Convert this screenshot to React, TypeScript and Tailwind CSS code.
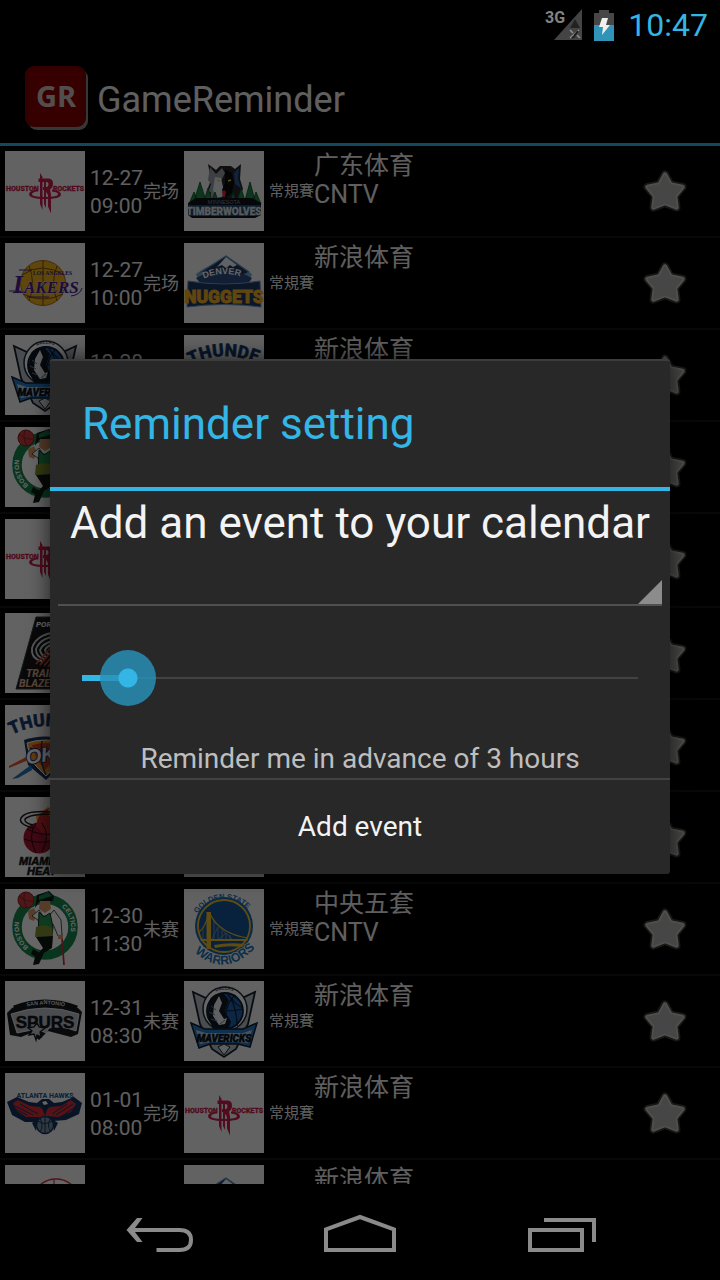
import { useState } from 'react';
import type { ReactNode } from 'react';

const roboto = 'Roboto, sans-serif';
const serif = '"Liberation Serif", serif';
const sans = '"Liberation Sans", sans-serif';

function Rockets() {
  return (
    <g fill="#c8204c">
      <text x="1" y="39.500" fontFamily={roboto} fontWeight="800" fontSize="7" stroke="#c8204c" strokeWidth=".3">HOUSTON</text>
      <text x="48" y="39.500" fontFamily={roboto} fontWeight="800" fontSize="7" stroke="#c8204c" strokeWidth=".3">ROCKETS</text>
      <path d="M35 22l2.500 4v33l-2.500-6z" />
      <path d="M33.500 27.500H43q5 0 5 5 0 4-3 6l1 5v19l-3-7V44l-3-5h-2v-3h4q1.500-.5 1.500-3 0-2-2-2h-8z" />
      <path d="M39 31h2v26l-2-4z" />
      <path d="M33 38.500q-9 1-9 4.500 0 5 16 5t16-4.500q0-4-9-5v2q6 .8 6 2.800 0 2.700-13 2.700t-13-2.700q0-2 6-3z" />
    </g>
  );
}

function Wolves() {
  return (
    <g>
      <path fill="#26272c" d="M24 13l8 6 4-4h11l4 3 6-5-1 15 3 10-5 9-9 5H35l-9-7-2-8 3-8z" />
      <path fill="#9a9ea6" d="M26 16l6 7 6-6 3 5-4 8-3 16-9 4 2-9-3 1 3-9-3-4z" />
      <path fill="#e6e8ec" d="M31 26l6 1 2 9 2 3-3 7-6 1-3-8z" />
      <path fill="#2c5a9c" d="M50 22l5-5-1 11 3 9-6-4z" />
      <path fill="#0b0c0e" d="M41 18l7 4 2 10-2 10-7 6-3-9 3-7z" />
      <path stroke="#e9c832" strokeWidth="1.500" d="M33 29l3 1M44 30l3-1" />
      <path fill="#d22c42" d="M38 41l2-2 2 2-1 5h-2z" />
      <g fill="#1f8a45" stroke="#0c4625" strokeWidth=".8">
        <path d="M16 31l7 22H9zM66 31l6 22H60zM24 37l5 16H19zM57 37l5 16H52zM31 41l4 12h-8zM49 41l4 12h-7zM10 41l5 12H5zM72 41l5 12h-9z" />
      </g>
      <path fill="#10131a" d="M12 47h56l9 5v12l-6 3H8l-4-3V52z" />
      <text x="40" y="52.500" textAnchor="middle" fontFamily={sans} fontSize="5.500" fill="#80848c">MINNESOTA</text>
      <path fill="#1f4a72" d="M4 54h73l-3 11H7z" />
      <text x="40" y="63.500" textAnchor="middle" fontFamily={roboto} fontWeight="800" fontSize="10" fill="#dfe5ea" stroke="#dfe5ea" strokeWidth=".3">TIMBERWOLVES</text>
    </g>
  );
}

function Lakers() {
  return (
    <g>
      <circle cx="38" cy="40" r="22.500" fill="#eeb11c" stroke="#a96f10" />
      <g fill="none" stroke="#6b4510" strokeWidth=".9">
        <path d="M17 32q20-14 42 0M38 17.500v45M24 23q7 17 0 35M52 23q-7 17 0 35M18 51q20 10 40 0" />
      </g>
      <text x="28" y="31.500" fontFamily={serif} fontWeight="700" fontSize="5.600" fill="#4d2383">LOS ANGELES</text>
      <g fontFamily={serif} fontStyle="italic" fontWeight="700" fill="#4b2290" stroke="#ecdff2" strokeWidth=".6" paintOrder="stroke">
        <text x="8" y="50" fontSize="25">L</text>
        <text x="19" y="50" fontSize="17">AKERS</text>
      </g>
      <path fill="none" stroke="#4b2290" d="M4 48h12M66 53q9-1 11-8M14 27h13M22 54h22" />
    </g>
  );
}

function Nuggets() {
  return (
    <g>
      <path fill="#79a9d0" d="M12 31q28-22 56 0l-3 8H15z" />
      <path fill="#1e3767" stroke="#5b90c2" strokeWidth="1.200" d="M17 29l25-16 23 16-6 3q-18-8-35 1z" />
      <path fill="#f2f4f8" d="M42 14l11 8-4 2-3-2-4 3-4-3-5 2z" />
      <path fill="#2d4c83" d="M12 35q28-15 56 0l-4 6H17z" />
      <path id="denver-arc" fill="none" d="M17 37q24-12 48 0" />
      <text fontFamily={sans} fontWeight="700" fontSize="9" fill="#fff"><textPath href="#denver-arc" startOffset="3">DENVER</textPath></text>
      <path fill="#1e3767" stroke="#6d95b8" d="M4 38q36 6 72 0l1 26q-37-5-74 0z" />
      <text x="40" y="60" textAnchor="middle" fontFamily={roboto} fontWeight="900" fontSize="17.500" fill="#f0b12a" stroke="#f0b12a" strokeWidth=".8">NUGGETS</text>
    </g>
  );
}

function Mavericks() {
  return (
    <g>
      <path fill="#b9c0c8" stroke="#15202c" strokeWidth="1.800" d="M9 11l13 6h36l13-6-7 32-12 25-12 8-12-8-12-25z" />
      <circle cx="41" cy="28" r="22" fill="#fff" stroke="#1b2734" strokeWidth="1.500" />
      <circle cx="41" cy="30" r="18" fill="#1e63ac" stroke="#0d1a2c" strokeWidth="1.800" />
      <path fill="none" stroke="#101c30" strokeWidth="1.200" d="M43 12q10 12 10 33M48 18q6 8 10 8M42 30q9 0 17-2M51 14q-9 8-10 25" />
      <path fill="#111923" d="M26 18q6-7 14-5l5 6-4 11 6 11-3 8H30l-7-13z" />
      <path fill="#eef1f4" d="M35 15l3 7-3 8 5 8 3-1-2 6-6 1-6-9 1-11z" />
      <path stroke="#707b87" strokeWidth="1" d="M27 25l5 4M25 31l6 3M27 38l6 2M36 43l5-4" />
      <path id="dallas-arc" fill="none" d="M29 12q12-7 24 0" />
      <text fontFamily={sans} fontWeight="700" fontSize="4.500" fill="#26313f"><textPath href="#dallas-arc" startOffset="3">DALLAS</textPath></text>
      <path fill="#2779c2" stroke="#10202f" strokeWidth="1.500" d="M7 42l14 6h38l14-6-7 24-12-3H26l-11 4z" />
      <path fill="#b9cede" d="M12 49l10 3h37l9-3-4 13-10-1H27l-11 2z" />
      <text x="40" y="60.500" textAnchor="middle" fontFamily={roboto} fontWeight="900" fontStyle="italic" fontSize="10" fill="#0b1119" stroke="#0b1119" strokeWidth=".5">MAVERICKS</text>
      <path fill="#e8edf1" stroke="#17212d" d="M34 66l6-3 6 3-6 8z" />
    </g>
  );
}

function Thunder() {
  return (
    <g>
      <path id="thunder-arc" fill="none" d="M5 31q34-19 73-1" />
      <text fontFamily={roboto} fontWeight="800" fontSize="17.500" fill="#143a6d" stroke="#143a6d" strokeWidth=".5"><textPath href="#thunder-arc" startOffset="2">THUNDER</textPath></text>
      <path fill="#17335c" d="M19 35q20-7 44 0l-3 22-19 18-18-15z" />
      <path fill="#f09a25" stroke="#fff" d="M22 38q18-6 38 0l-4 18-15 15-15-15z" />
      <path fill="#d8401f" d="M27 40q14-4 27 0l-5 16-9 9-8-10z" />
      <path fill="none" stroke="#17335c" strokeWidth="1.500" d="M25 43q15 7 33-1M37 36q-3 20 4 34M49 37q6 15-4 26" />
      <path fill="#e2542b" d="M4 61l19-10-2 5-17 7z" />
      <path fill="#2173b5" d="M7 74l19-14 1 5-14 8z" />
      <text x="21" y="58" fontFamily={sans} fontStyle="italic" fontWeight="700" fontSize="20" fill="#fff" stroke="#17335c" strokeWidth="2" paintOrder="stroke" transform="rotate(-8 30 54)">OKC</text>
    </g>
  );
}

function Celtics() {
  return (
    <g>
      <circle cx="40" cy="38" r="28" fill="#fff" stroke="#17854b" strokeWidth="9.500" />
      <path id="boston-arc" fill="none" d="M25.100 59.300A26 26 0 0 1 16.400 27" />
      <text fontFamily={sans} fontWeight="700" fontSize="6.500" fill="#fff"><textPath href="#boston-arc" startOffset="2">BOSTON</textPath></text>
      <path id="celtics-arc" fill="none" d="M54.900 16.700A26 26 0 0 1 59.900 54.700" />
      <text fontFamily={sans} fontWeight="700" fontSize="6.500" fill="#fff"><textPath href="#celtics-arc" startOffset="2">CELTICS</textPath></text>
      <circle cx="21" cy="11" r="8" fill="#c83b3c" stroke="#8a2226" />
      <path fill="none" stroke="#8a2226" d="M14 7q7 6 14 5M20 3q-3 8 2 16" />
      <path fill="#111c17" d="M32 6l12-4 5 5-1 5-14 1-4 6z" />
      <path fill="#17854b" d="M34 7l9-4 4 4-13 4z" />
      <path fill="#d89a68" d="M35 12h10l1 8-6 4-6-4zM23 22l6-3 3 6-3 7-5-2z" />
      <path fill="#fff" stroke="#182c22" strokeWidth=".8" d="M27 27l7-6 4 6h6l5-6 7 10 1 15-4 1-5-12-4 4H35l-2-8z" />
      <path fill="#249151" stroke="#14331f" d="M34 23l5 5 6-4 3 14-1 9H33z" />
      <path fill="#7f8f2d" d="M31 38q9-4 16 1l1 8-18 1z" />
      <path fill="#101913" d="M31 48l17-1-1 12-8 5-5 11-6 1 2-8 8-9zM28 60l10 6-3 4-9-5z" />
      <path stroke="#c42d3c" strokeWidth="1.700" d="M57 49l2 27" />
      <path fill="#d89a68" d="M53 46h5v4h-5z" />
    </g>
  );
}

function Blazers() {
  return (
    <g>
      <path fill="#17181b" stroke="#3a3b40" d="M31 4h43L56 76H11z" />
      <text x="31" y="14" fontFamily={roboto} fontWeight="800" fontStyle="italic" fontSize="8" fill="#fff">PORTLAND</text>
      <g fill="none" stroke="#d5d8dc" strokeWidth="1.800">
        <path d="M58 19q-26 0-31 16-1 11 10 13M57 23q-21 0-26 13 0 8 8 10M55 27q-16 1-20 10 1 6 7 7M53 31q-10 0-13 6 1 4 5 4" />
      </g>
      <path fill="none" stroke="#d34c38" strokeWidth="1.800" d="M50 30L31 51M54 30L35 52M58 30L39 53M62 30L43 54" />
      <g fontFamily={roboto} fontWeight="800" fontStyle="italic" fontSize="10.500" fill="#d9ad92">
        <text x="21" y="64">TRAIL</text>
        <text x="14" y="74">BLAZERS</text>
      </g>
    </g>
  );
}

function Heat() {
  return (
    <g>
      <path fill="#ee9d23" d="M31 19l12-9 7 4-2 9 9-3-9 14H34z" />
      <circle cx="34" cy="41" r="15.500" fill="#a61733" />
      <path fill="#c72731" d="M31 28q2-12 13-17-4 6 3 10-1 11 4 18l-4 9z" />
      <path fill="none" stroke="#26060d" d="M22 32q13 7 27 5M19 42q15 6 30 1M31 26q-9 13 0 30M37 26q9 12 0 29" />
      <path fill="none" stroke="#1a1a1d" strokeWidth="1.500" d="M28 31q-15-4-12-10 5-8 31-6M28 28q-9-2-8-6 5-5 27-5" />
      <g fontFamily={sans} fontStyle="italic" fontWeight="700" fill="#17171a" stroke="#17171a" strokeWidth=".6">
        <text x="14" y="68" fontSize="11">MIAMI</text>
        <text x="22" y="78" fontSize="11">HEAT</text>
      </g>
    </g>
  );
}

function Warriors() {
  return (
    <g>
      <circle cx="40" cy="37" r="29" fill="#1765ae" />
      <circle cx="40" cy="37" r="26" fill="#145398" stroke="#f1bf2c" strokeWidth="1.800" />
      <path fill="#f1bf2c" d="M22.500 23H27v37h-4.500zM16 50h48l-1 2H17zM30 56q16-3 31-1l-3 3q-14-2-27 1z" />
      <path fill="none" stroke="#f1bf2c" strokeWidth="1.200" d="M26 25q10 20 38 24M24 25q-2 13-9 18" />
      <path fill="none" stroke="#8999a0" strokeWidth=".8" d="M30 33v17M34 38v12M38 41v9M42 44v6M46 46v4M29 32l19 18M34 38l-6 12M42 44l-7 6M19 37v13" />
      <path id="golden-arc" fill="none" d="M11 29A32 32 0 0 1 68 26" />
      <text fontFamily={sans} fontWeight="700" fontSize="7.500" fill="#1d71b6"><textPath href="#golden-arc" startOffset="5">GOLDEN STATE</textPath></text>
      <path id="warriors-arc" fill="none" d="M9 62Q41 91 72 58" />
      <text fontFamily={sans} fontWeight="700" fontSize="12.500" fill="#1d71b6" stroke="#f4f4f4" strokeWidth="1.500" paintOrder="stroke"><textPath href="#warriors-arc" startOffset="2">WARRIORS</textPath></text>
    </g>
  );
}

function Spurs() {
  return (
    <g>
      <path fill="#17191d" d="M7 27q32-13 66 0l4 4-4 22-7 3-23-6-9 9-8-7-10 4-11-2L2 32z" />
      <path fill="#b9bfc5" stroke="#fff" strokeWidth=".8" d="M6 33q34-12 68 0l-3 17q-16-6-27-3l-3 5-9-4-20 4z" />
      <path fill="none" stroke="#111418" strokeWidth="5" d="M9 27q31-12 63 0" />
      <path id="antonio-arc" fill="none" d="M12 28q28-9 58 0" />
      <text fontFamily={sans} fontWeight="700" fontSize="5.500" fill="#d5d8da"><textPath href="#antonio-arc" startOffset="10">SAN ANTONIO</textPath></text>
      <text x="40" y="47" textAnchor="middle" fontFamily={sans} fontWeight="700" fontSize="17" fill="#14161a" stroke="#14161a" strokeWidth=".5">SPURS</text>
      <path fill="#c4c9ce" stroke="#14161a" strokeWidth="1.300" d="M32 42l2 4 6 1-5 4 1 5-4-2-1 5-2-6-5 1 3-4-4-3 6-1z" />
    </g>
  );
}

function Hawks() {
  return (
    <g>
      <text x="40" y="25" textAnchor="middle" fontFamily={roboto} fontWeight="800" fontSize="7" fill="#1d568e">ATLANTA HAWKS</text>
      <path fill="#14345f" d="M2 29l10-5 12 5 8 1 5-4h7l5 4 8-1 12-5 8 6-3 11-13 6-13 1-7 3-8-2-13 0-13-7z" />
      <path fill="#d92f37" d="M8 30l5-3 12 6 10 1 5 4 5-4 11-1 10-6 5 4-5 8-13 5-11-1-2 4-7-3-12 0-9-6z" />
      <g stroke="#14345f" strokeWidth="1"><path d="M6 34l16 8M10 33l18 9M15 31l18 10M72 33l-15 10M68 31l-17 11M62 31l-15 10" /></g>
      <path fill="#182f52" d="M36 28q4-3 8 0l-1 6-3 9-3-8z" />
      <path fill="#fff" d="M37 29l4-1 2 3-4 1z" />
      <circle cx="40" cy="52" r="8.500" fill="#78909f" stroke="#14345f" strokeWidth="1.500" />
      <path fill="none" stroke="#14345f" d="M33 48q7 5 14 0M40 43v18M35 45q4 8 0 14M46 45q-5 7 0 14" />
      <path fill="#14345f" d="M27 50l6-4-2 12zM53 50l-6-4 2 12z" />
    </g>
  );
}

function Clippers() {
  return (
    <g>
      <circle cx="51" cy="38" r="24" fill="#fff" stroke="#d42f40" strokeWidth="1.500" />
      <path fill="none" stroke="#d42f40" strokeWidth="1.200" d="M35 21q10 12 31 0M49 14v45M32 48q20-12 40 0" />
      <path fill="#244d95" d="M8 44q30-14 64-6l-6 10q-28-6-54 4z" />
    </g>
  );
}

const logos: Record<string, () => ReactNode> = {
  Rockets, Timberwolves: Wolves, Lakers, Nuggets, Mavericks, Thunder,
  Celtics, Blazers, Heat, Warriors, Spurs, Hawks, Clippers,
};

function TeamLogo({ team }: { team: string }) {
  const Art = logos[team];
  return (
    <svg viewBox="0 0 80 80" role="img" aria-label={team} className="size-20 shrink-0 bg-[#f4f4f4]">
      <Art />
    </svg>
  );
}

type Game = {
  home: string;
  away: string;
  day?: string;
  time?: string;
  state?: string;
  kind?: string;
  channels?: string[];
  tall?: boolean;
};

const games: Game[] = [
  { home: 'Rockets', away: 'Timberwolves', day: '12-27', time: '09:00', state: '完场', kind: '常規賽', channels: ['广东体育', 'CNTV'] },
  { home: 'Lakers', away: 'Nuggets', day: '12-27', time: '10:00', state: '完场', kind: '常規賽', channels: ['新浪体育'] },
  { home: 'Mavericks', away: 'Thunder', day: '12-28', channels: ['新浪体育'] },
  { home: 'Celtics', away: 'Clippers' },
  { home: 'Rockets', away: 'Clippers', tall: true },
  { home: 'Blazers', away: 'Clippers' },
  { home: 'Thunder', away: 'Clippers' },
  { home: 'Heat', away: 'Clippers' },
  { home: 'Celtics', away: 'Warriors', day: '12-30', time: '11:30', state: '未赛', kind: '常規賽', channels: ['中央五套', 'CNTV'] },
  { home: 'Spurs', away: 'Mavericks', day: '12-31', time: '08:30', state: '未赛', kind: '常規賽', channels: ['新浪体育'] },
  { home: 'Hawks', away: 'Rockets', day: '01-01', time: '08:00', state: '完场', kind: '常規賽', channels: ['新浪体育'] },
  { home: 'Clippers', away: 'Nuggets', channels: ['新浪体育'] },
];

const STAR = 'M25 7.500L30.500 17.500 42.500 20 35 29 36.500 40.500 25 36 13.500 40.500 15 29 7.500 20 19.500 17.500Z';

function GameRow({ game }: { game: Game }) {
  return (
    <li className={`flex shrink-0 border-b-2 border-[#141414] pt-[5px] pl-[5px] ${game.tall ? 'h-[94px]' : 'h-[92px]'}`}>
      <TeamLogo team={game.home} />
      <div className="ml-[5px] w-[53px] shrink-0 pt-[13px] text-[21px] leading-7">
        <div className="h-7">{game.day}</div>
        <div className="h-7">{game.time}</div>
      </div>
      <span className="flex h-20 w-[41px] shrink-0 items-center text-[18px]">{game.state}</span>
      <TeamLogo team={game.away} />
      <span className="ml-[5px] flex h-20 w-[45px] shrink-0 items-center text-[15px]">{game.kind}</span>
      <div className="flex flex-1 flex-col text-[25px] leading-[29px]">
        {game.channels?.map((channel) => (
          <span key={channel}>{channel}</span>
        ))}
      </div>
      <button type="button" aria-label="Remind me" className="mr-8 flex h-20 w-12 items-center justify-center">
        <svg viewBox="0 0 48 48" className="size-12">
          <path d={STAR} fill="#b0b0b0" stroke="#3c3c34" strokeWidth="8" strokeLinejoin="round" />
          <path d={STAR} fill="#b0b0b0" stroke="#c6c6c4" strokeWidth="4.500" strokeLinejoin="round" />
          <path d={STAR} fill="#b0b0b0" stroke="#b0b0b0" strokeWidth="1" strokeLinejoin="round" />
        </svg>
      </button>
    </li>
  );
}

function StatusBar() {
  return (
    <div className="flex h-[50px] shrink-0 items-center justify-end pr-3 text-[#33b5e5]">
      <svg viewBox="0 0 38 34" className="mr-3 h-[34px] w-[38px]" aria-label="3G signal">
        <text x="1" y="15" fontFamily={roboto} fontWeight="700" fontSize="16" fill="#828282">3G</text>
        <path fill="#444" d="M38 1v31H10z" />
        <path fill="#222" d="M31 11l5 9H26z" />
        <path stroke="#909090" strokeWidth="1.500" d="M26 22l3 3M35 22l-9 8M33 27l3 3" />
        <path stroke="#1c1c1c" strokeWidth="2" d="M30 28l4-5M28 30l3-2" />
      </svg>
      <svg viewBox="0 0 20 32" className="mr-[14px] h-8 w-5" aria-label="Battery charging">
        <path fill="#474747" d="M5 1h10v3h5v12H0V4h5z" />
        <path fill="#2f94b8" d="M0 16h20v16H0z" />
        <path fill="#f0f0ee" d="M8 9h6l-2 7h4L8 26l1-8H5z" />
      </svg>
      <time className="text-[32px] leading-none">10:47</time>
    </div>
  );
}

function NavBar() {
  return (
    <nav className="flex h-24 shrink-0 items-center justify-center gap-[122px] text-[#8a8a8a]">
      <button type="button" aria-label="Back">
        <svg viewBox="0 0 80 48" className="h-12 w-20" fill="none" stroke="currentColor" strokeWidth="4">
          <path d="M13 22h48.500q11.500 0 11.500 10t-11.500 10H38.500" />
          <path fill="currentColor" stroke="none" d="M19 10h5.500l-9 12 9 12H19L8.500 22z" />
        </svg>
      </button>
      <button type="button" aria-label="Home">
        <svg viewBox="0 0 80 48" className="h-12 w-20" fill="none" stroke="currentColor" strokeWidth="4">
          <path d="M6 21.400L40 9l34 12.400V42H6z" />
        </svg>
      </button>
      <button type="button" aria-label="Recent apps">
        <svg viewBox="0 0 80 48" className="h-12 w-20" fill="none" stroke="currentColor" strokeWidth="4">
          <path d="M8 22h52v20H8zM22 12h50v22" />
        </svg>
      </button>
    </nav>
  );
}

const MAX_HOURS = 36;

function ReminderDialog() {
  const [hours, setHours] = useState(3);
  return (
    <section
      role="dialog"
      aria-labelledby="dialog-title"
      className="mx-[50px] w-full rounded-[3px] border-t-2 border-[#3d3d3d] bg-[#282828] shadow-[0_0_20px_2px_rgba(0,0,0,0.6)]"
    >
      <h2 id="dialog-title" className="flex h-[130px] items-center border-b-4 border-[#33b5e5] px-8 text-[44px] text-[#33b5e5]">
        Reminder setting
      </h2>
      <div className="flex flex-col px-2 text-center">
        <label htmlFor="calendar" className="h-[67px] text-[44px] leading-[64px] whitespace-nowrap text-[#f3f3f3]">
          Add an event to your calendar
        </label>
        <div className="grid h-12 border-b-2 border-[#505050]">
          <select id="calendar" className="col-start-1 row-start-1 w-full appearance-none bg-transparent text-[#f3f3f3]" />
          <svg viewBox="0 0 24 24" className="pointer-events-none col-start-1 row-start-1 size-6 self-end justify-self-end">
            <path fill="#8c8c8c" d="M24 0v24H0z" />
          </svg>
        </div>
        <div className="mt-11 grid h-14 items-center">
          <div className="col-start-1 row-start-1 mx-6 flex items-center">
            <div className="h-1.5 bg-[#33b5e5]" style={{ width: `${(hours / MAX_HOURS) * 100}%` }} />
            <div className="h-0.5 flex-1 bg-[#424242]" />
          </div>
          <input
            id="hours"
            type="range"
            min={0}
            max={MAX_HOURS}
            value={hours}
            aria-labelledby="hours-label"
            onChange={(event) => setHours(Number(event.target.value))}
            className="col-start-1 row-start-1 -mx-1 h-14 appearance-none bg-transparent [&::-webkit-slider-thumb]:size-14 [&::-webkit-slider-thumb]:appearance-none [&::-webkit-slider-thumb]:rounded-full [&::-webkit-slider-thumb]:bg-[radial-gradient(circle,#33b5e5_9px,rgb(40_145_185/0.82)_10px)]"
          />
        </div>
        <label id="hours-label" htmlFor="hours" className="mt-9 h-9 text-[28px] leading-[34px] text-[#bebebe]">
          Reminder me in advance of {hours} hours
        </label>
      </div>
      <button type="button" className="h-24 w-full border-t-2 border-[#424242] text-[28px] text-[#f3f3f3]">
        Add event
      </button>
    </section>
  );
}

export default function App() {
  return (
    <div className="flex h-screen flex-col overflow-hidden bg-black font-['Roboto','Noto_Sans_CJK_SC',sans-serif]">
      <StatusBar />
      <main className="grid min-h-0 flex-1 grid-cols-1 grid-rows-1 overflow-hidden">
        <div className="col-start-1 row-start-1 flex min-h-0 flex-col overflow-hidden text-[#ededed]">
          <header className="flex h-24 shrink-0 items-center border-b-[3px] border-[#33b5e5] pt-[3px] pl-6">
            <svg viewBox="0 0 66 66" className="size-[66px]" aria-hidden="true">
              <rect x="4" y="4" width="60" height="61" rx="9" fill="#8b8b88" />
              <rect x="1" y="1" width="61" height="61" rx="9" fill="#7d0101" />
              <rect x="5" y="5" width="53" height="53" rx="7" fill="#8a0000" />
              <text x="32" y="42" textAnchor="middle" fontFamily='"Open Sans", sans-serif' fontWeight="700" fontSize="29" fill="#cfc4c4">GR</text>
            </svg>
            <h1 className="ml-[7px] pt-1 text-[36px]">GameReminder</h1>
          </header>
          <ul className="flex min-h-0 flex-1 flex-col overflow-hidden">
            {games.map((game, index) => (
              <GameRow key={index} game={game} />
            ))}
          </ul>
        </div>
        <div className="z-10 col-start-1 row-start-1 flex items-center bg-black/60 pb-0.5">
          <ReminderDialog />
        </div>
      </main>
      <NavBar />
    </div>
  );
}
